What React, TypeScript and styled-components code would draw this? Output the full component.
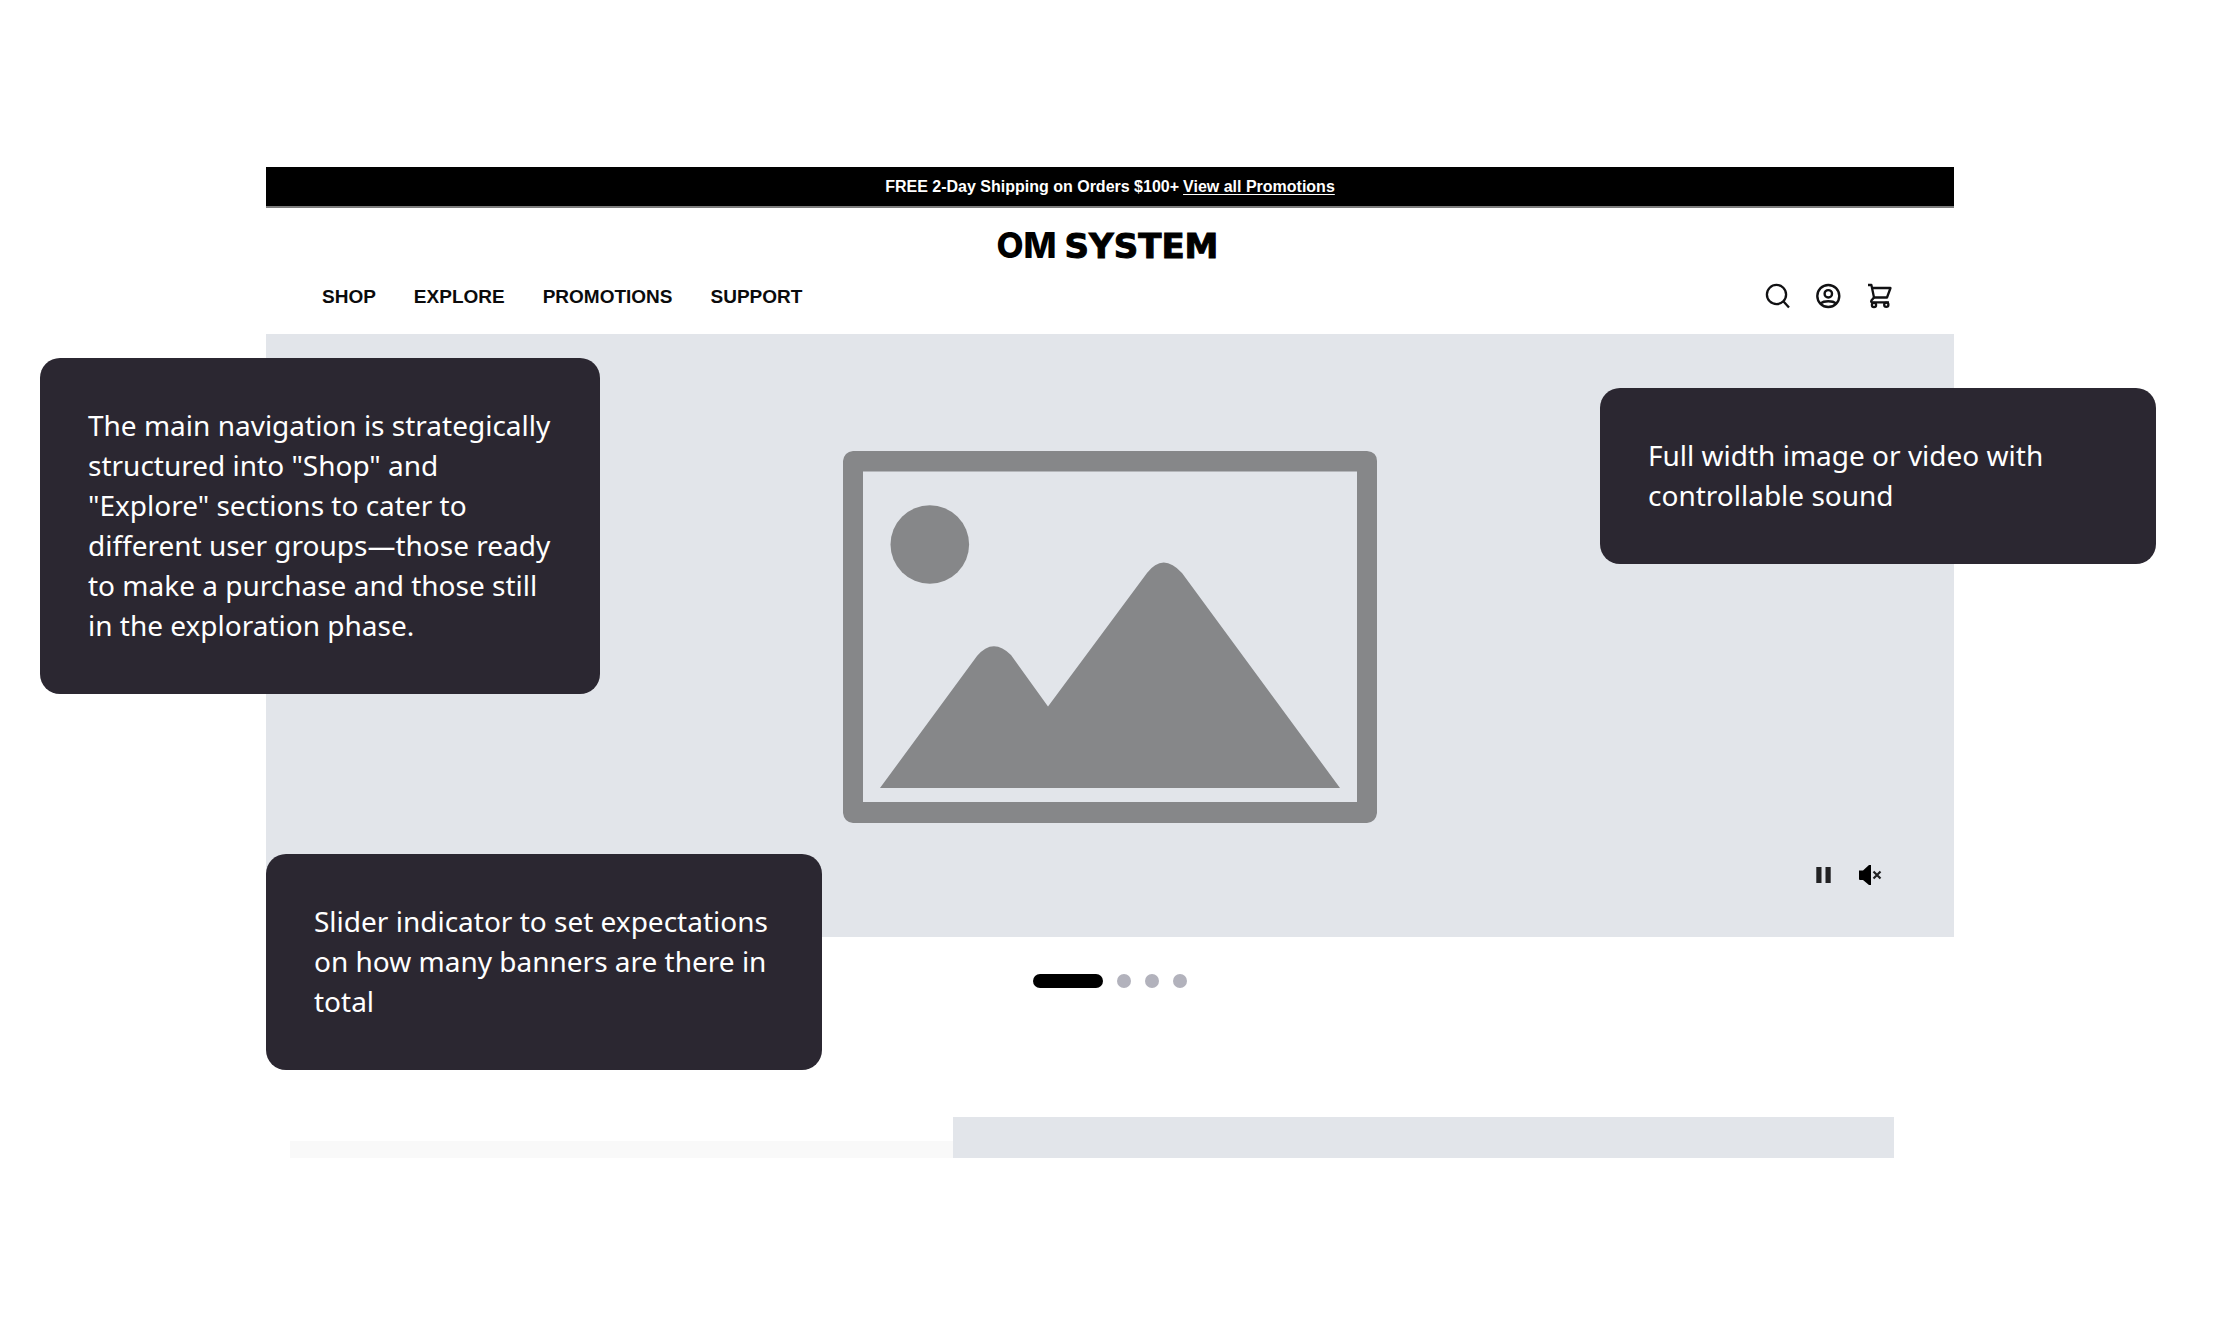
import React from 'react';
import styled, { createGlobalStyle } from 'styled-components';

const GlobalStyle = createGlobalStyle`
  *, *::before, *::after { box-sizing: border-box; }
  body {
    margin: 0;
    background: #ffffff;
    color: #0b0b0c;
    font-family: "Liberation Sans", Arial, sans-serif;
  }
`;

const Page = styled.div`
  position: relative;
  padding: 167px 266px 166px;
`;

const Announcement = styled.p`
  margin: 0;
  display: flex;
  justify-content: center;
  gap: 4px;
  background: #000000;
  border-bottom: 2px solid #7d7d7d;
  color: #ffffff;
  font-size: 16px;
  font-weight: 700;
  line-height: 39px;
`;

const AnnouncementLink = styled.a`
  color: inherit;
  text-decoration: underline;
  text-decoration-thickness: 1px;
  text-underline-offset: 2px;
`;

const Header = styled.header`
  display: flex;
  flex-direction: column;
  gap: 21px;
  padding: 20px 61px 24px 56px;
`;

const Logo = styled.a`
  align-self: center;
  display: flex;
  align-items: baseline;
  gap: 8px;
  height: 34px;
  line-height: 34px;
  color: #000000;
  text-decoration: none;
`;

const LogoMark = styled.span`
  font-family: Inter, sans-serif;
  font-size: 35px;
  font-weight: 800;
`;

const LogoWord = styled.span`
  font-family: "DejaVu Sans", sans-serif;
  font-size: 34px;
  font-weight: 700;
  -webkit-text-stroke: 1px #000000;
`;

const NavRow = styled.div`
  display: flex;
  justify-content: space-between;
  align-items: flex-start;
`;

const Nav = styled.nav`
  display: flex;
  gap: 38px;
`;

const NavLink = styled.a`
  color: #0b0b0c;
  font-size: 19px;
  font-weight: 700;
  line-height: 27px;
  text-decoration: none;
`;

const Tools = styled.div`
  display: flex;
  gap: 25px;
`;

const IconButton = styled.button`
  display: flex;
  padding: 0;
  border: 0;
  background: none;
  color: #111113;
  cursor: pointer;
`;

const Hero = styled.section`
  display: grid;
  background: #e2e5ea;
`;

const Artwork = styled.div`
  grid-area: 1 / 1;
  display: flex;
  justify-content: center;
  padding: 117px 0 114px;
`;

const MediaControls = styled.div`
  grid-area: 1 / 1;
  align-self: end;
  justify-self: end;
  display: flex;
  align-items: center;
  gap: 26px;
  padding: 0 72px 51px 0;
`;

const Indicators = styled.div`
  display: flex;
  justify-content: center;
  gap: 14px;
  padding: 37px 0 129px;
`;

const Indicator = styled.button<{ $active?: boolean }>`
  width: ${({ $active }) => ($active ? '70px' : '14px')};
  height: 14px;
  padding: 0;
  border: 0;
  border-radius: 7px;
  background: ${({ $active }) => ($active ? '#000000' : '#b2b2bc')};
  cursor: pointer;
`;

const NextSection = styled.section`
  display: flex;
  align-items: flex-end;
  padding: 0 60px 0 24px;
`;

const CopyPanel = styled.div`
  flex: 663;
  height: 17px;
  background: #f9f9f9;
`;

const MediaPanel = styled.div`
  flex: 941;
  height: 41px;
  background: #e2e5ea;
`;

const Callout = styled.aside<{ $top: number; $left?: number; $right?: number; $width: number }>`
  position: absolute;
  top: ${({ $top }) => $top}px;
  left: ${({ $left }) => ($left === undefined ? 'auto' : `${$left}px`)};
  right: ${({ $right }) => ($right === undefined ? 'auto' : `${$right}px`)};
  width: ${({ $width }) => $width}px;
  padding: 47px 48px 49px;
  border-radius: 20px;
  background: #2b2731;
  color: #ffffff;
  font-family: "Noto Sans", sans-serif;
  font-size: 28px;
  line-height: 40px;
`;

const SearchIcon = () => (
  <svg width="26" height="26" viewBox="0 0 26 26" fill="none" stroke="currentColor" strokeWidth="2.3">
    <circle cx="11.5" cy="11.5" r="9.6" />
    <path d="M18.3 18.3 24 24.6" />
  </svg>
);

const AccountIcon = () => (
  <svg width="26" height="26" viewBox="0 0 26 26" fill="none" stroke="currentColor" strokeWidth="2.4">
    <circle cx="12.3" cy="13" r="11" />
    <circle cx="12.3" cy="10.8" r="3.7" />
    <path d="M4.6 20.4C6.500 18.800 9.300 18.200 12.300 18.200s5.800.6 7.700 2.200" />
  </svg>
);

const CartIcon = () => (
  <svg width="26" height="26" viewBox="0 0 26 26" fill="none" stroke="currentColor" strokeWidth="2.3" strokeLinejoin="round">
    <path d="M1 2h3.400l2.600 12.500h13L23.500 5H5.200" />
    <path d="M7 14.500 4.400 17.600c-.5.900-.2 1.700.8 1.700H22" />
    <circle cx="7" cy="22" r="2.100" />
    <circle cx="19.300" cy="21.800" r="2.100" />
  </svg>
);

const PauseIcon = () => (
  <svg width="16" height="22" viewBox="0 0 16 22" fill="#222224">
    <rect x="0.3" y="3" width="5.200" height="16" />
    <rect x="9.500" y="3" width="5.200" height="16" />
  </svg>
);

const MutedIcon = () => (
  <svg width="24" height="22" viewBox="0 0 24 22">
    <path d="M1 6.500h4L11 1h2v20h-2l-6-5H2q-1 0-1-1z" fill="#000000" />
    <path d="m15.500 7.500 7 7m0-7-7 7" fill="none" stroke="#222224" strokeWidth="2.200" />
  </svg>
);

const ImagePlaceholder = () => (
  <svg width="534" height="372" viewBox="0 0 534 372" fill="#868789" role="img" aria-label="Banner image">
    <path
      fillRule="evenodd"
      d="M10 0H524Q534 1 534 10V362Q533 371 524 372H10Q1 371 0 362V10Q1 1 10 0ZM20 20.500V351H514V20.500Z"
    />
    <circle cx="86.800" cy="93.500" r="39.300" />
    <path d="M37 337 134 205Q150 186 168 204L205 255.500 304 122Q320 101 339 122L497 337Z" />
  </svg>
);

const NAV_ITEMS = ['SHOP', 'EXPLORE', 'PROMOTIONS', 'SUPPORT'];
const BANNERS = [1, 2, 3, 4];

export default function App() {
  return (
    <>
      <GlobalStyle />
      <Page>
        <Announcement>
          <span>FREE 2-Day Shipping on Orders $100+</span>
          <AnnouncementLink href="#promotions">View all Promotions</AnnouncementLink>
        </Announcement>

        <Header>
          <Logo href="#home">
            <LogoMark>OM</LogoMark>
            <LogoWord>SYSTEM</LogoWord>
          </Logo>
          <NavRow>
            <Nav>
              {NAV_ITEMS.map((item) => (
                <NavLink key={item} href={`#${item.toLowerCase()}`}>{item}</NavLink>
              ))}
            </Nav>
            <Tools>
              <IconButton aria-label="Search"><SearchIcon /></IconButton>
              <IconButton aria-label="Account"><AccountIcon /></IconButton>
              <IconButton aria-label="Cart"><CartIcon /></IconButton>
            </Tools>
          </NavRow>
        </Header>

        <Hero>
          <Artwork><ImagePlaceholder /></Artwork>
          <MediaControls>
            <IconButton aria-label="Pause"><PauseIcon /></IconButton>
            <IconButton aria-label="Unmute"><MutedIcon /></IconButton>
          </MediaControls>
        </Hero>

        <Indicators>
          {BANNERS.map((n) => (
            <Indicator key={n} $active={n === 1} aria-label={`Banner ${n}`} />
          ))}
        </Indicators>

        <NextSection>
          <CopyPanel />
          <MediaPanel />
        </NextSection>

        <Callout $top={358} $left={40} $width={560}>
          The main navigation is strategically structured into "Shop" and "Explore" sections to
          cater to different user groups—those ready to make a purchase and those still in the
          exploration phase.
        </Callout>
        <Callout $top={388} $right={64} $width={556}>
          Full width image or video with controllable sound
        </Callout>
        <Callout $top={854} $left={266} $width={556}>
          Slider indicator to set expectations on how many banners are there in total
        </Callout>
      </Page>
    </>
  );
}
